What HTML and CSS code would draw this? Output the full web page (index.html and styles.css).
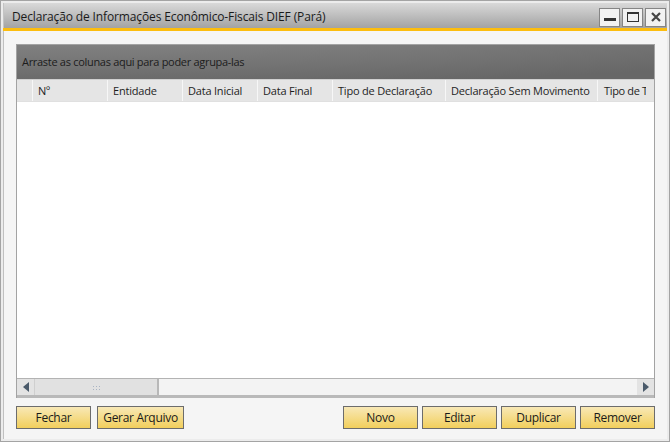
FILE: index.html
```html
<!DOCTYPE html>
<html lang="pt">
<head>
    <meta charset="UTF-8">
    <title>DIEF (Pará)</title>
    <link rel="stylesheet" href="styles.css">
</head>
<body>
    <div class="window">
        <div class="titlebar">
            <span class="title">Declaração de Informações Econômico-Fiscais DIEF (Pará)</span>
            <div class="win-buttons">
                <button class="win-btn"><svg width="12" height="10" viewBox="0 0 12 10"><rect x="0" y="6" width="12" height="3" fill="#333"/></svg></button>
                <button class="win-btn"><svg width="12" height="10" viewBox="0 0 12 10"><rect x="0.5" y="0.5" width="11" height="9" fill="none" stroke="#333"/><rect x="0" y="0" width="12" height="2" fill="#333"/></svg></button>
                <button class="win-btn"><svg width="10" height="10" viewBox="0 0 10 10"><path d="M1 1 L9 9 M9 1 L1 9" stroke="#444" stroke-width="2.2"/></svg></button>
            </div>
        </div>
        <div class="accent"></div>
        <div class="content">
            <div class="grid">
                <div class="group-panel">Arraste as colunas aqui para poder agrupa-las</div>
                <div class="header">
                    <div class="col col-sel"></div>
                    <div class="col w75">Nº</div>
                    <div class="col w75">Entidade</div>
                    <div class="col w75">Data Inicial</div>
                    <div class="col w75">Data Final</div>
                    <div class="col w113">Tipo de Declaração</div>
                    <div class="col w152">Declaração Sem Movimento</div>
                    <div class="col last">Tipo de Tributação</div>
                </div>
                <div class="rows"></div>
                <div class="hscroll">
                    <div class="arrow left"><svg width="6" height="10" viewBox="0 0 6 10"><path d="M6 0 L0 5 L6 10 Z" fill="#4a5a6a"/></svg></div>
                    <div class="thumb"><span class="grip"></span></div>
                    <div class="track"></div>
                    <div class="arrow right"><svg width="6" height="10" viewBox="0 0 6 10"><path d="M0 0 L6 5 L0 10 Z" fill="#4a5a6a"/></svg></div>
                </div>
            </div>
            <div class="actions">
                <div class="group left-group">
                    <button class="btn">Fechar</button>
                    <button class="btn wide">Gerar Arquivo</button>
                </div>
                <div class="group">
                    <button class="btn">Novo</button>
                    <button class="btn">Editar</button>
                    <button class="btn">Duplicar</button>
                    <button class="btn">Remover</button>
                </div>
            </div>
        </div>
    </div>
</body>
</html>
```

FILE: styles.css
```css
body {
    margin: 0;
    background: #ffffff;
    font-family: "Open Sans", "DejaVu Sans", sans-serif;
}

.window {
    box-sizing: border-box;
    width: 670px;
    height: 442px;
    border: 1px solid #a4a4a4;
    background: #ececec;
    padding: 2px;
    display: flex;
    flex-direction: column;
}

.titlebar {
    height: 25px;
    background: linear-gradient(#d9d9d9, #a3a3a3);
    display: flex;
    align-items: center;
    justify-content: space-between;
    padding: 0 1px 0 8px;
    border-left: 1px solid #c4c4c4;
}

.title {
    font-size: 12px;
    color: #1a1a1a;
    letter-spacing: -0.13px;
    padding-top: 1px;
}

.win-buttons {
    display: flex;
    gap: 2px;
    padding-top: 3px;
}

.win-btn {
    width: 21px;
    height: 19px;
    padding: 0;
    border: 1px solid #858585;
    background: #f2f2f2;
    display: flex;
    align-items: center;
    justify-content: center;
}

.accent {
    height: 3px;
    background: #fcbd0f;
}

.content {
    flex: 1;
    background: #f5f5f5;
    border-left: 1px solid #c0c0c0;
    padding: 13px 12px 10px 12px;
    display: flex;
    flex-direction: column;
}

.grid {
    flex: 1;
    border: 1px solid #a3a3a3;
    border-bottom: none;
    background: #ffffff;
    display: flex;
    flex-direction: column;
    overflow: hidden;
}

.group-panel {
    height: 34px;
    box-sizing: border-box;
    background: radial-gradient(ellipse 140% 60px at 10% -20px, #8c8c8c 0%, #737373 70%, #676767 100%);
    font-size: 11px;
    color: #1c1c1c;
    padding: 9px 0 0 5px;
    letter-spacing: -0.3px;
}

.header {
    display: flex;
    height: 21px;
    background: #e5e5e5;
    border-top: 1px solid #d0d0d0;
    border-bottom: 1px solid #e0e0e0;
    white-space: nowrap;
    overflow: hidden;
}

.col {
    box-sizing: border-box;
    flex: none;
    border-right: 1px solid #f7f7f7;
    font-size: 11px;
    color: #1e1e1e;
    padding: 3px 0 0 5px;
    letter-spacing: -0.2px;
    overflow: hidden;
}

.col-sel { width: 16px; }
.w75 { width: 75px; }
.w113 { width: 113px; }
.w152 { width: 152px; }
.last { width: 48px; border-right: none; padding-left: 6px; letter-spacing: -0.35px; }

.rows {
    flex: 1;
    background: #ffffff;
}

.hscroll {
    height: 16px;
    display: flex;
    background: #f3f3f3;
    border-top: 1px solid #b3b3b3;
    border-bottom: 3px solid #b9b9b9;
}

.arrow {
    width: 17px;
    display: flex;
    align-items: center;
    justify-content: center;
    background: #e3e3e3;
}

.thumb {
    width: 122px;
    background: #e1e1e1;
    border-left: 1px solid #cfcfcf;
    border-right: 2px solid #b8b8b8;
    display: flex;
    align-items: center;
    justify-content: center;
}

.grip {
    width: 8px;
    height: 5px;
    background-image: radial-gradient(circle, #a9b4c4 0.8px, transparent 1px);
    background-size: 3px 3px;
}

.track {
    flex: 1;
}

.actions {
    display: flex;
    justify-content: space-between;
    padding-top: 8px;
}

.group {
    display: flex;
    gap: 4px;
}

.left-group {
    gap: 6px;
}

.btn {
    box-sizing: border-box;
    width: 75px;
    height: 23px;
    padding: 0;
    border: 1px solid #6c6c6c;
    background: linear-gradient(#f8e8b6, #f2cf5c);
    font-family: "Open Sans", "DejaVu Sans", sans-serif;
    font-size: 12px;
    color: #1a1a1a;
    letter-spacing: -0.3px;
}

.btn.wide {
    width: 87px;
}
```
